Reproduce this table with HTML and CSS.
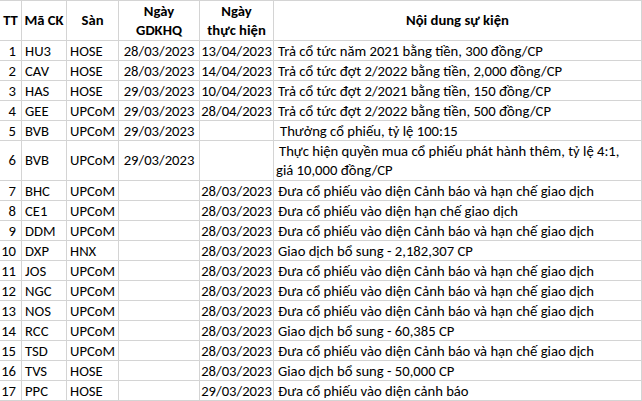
FILE: index.html
```html
<!DOCTYPE html>
<html lang="vi">
<head>
<meta charset="utf-8">
<link rel="stylesheet" href="styles.css">
</head>
<body>
<div class="sheet">
  <div class="c h">TT</div><div class="c h">Mã CK</div><div class="c h">Sàn</div><div class="c h">Ngày<br>GDKHQ</div><div class="c h">Ngày<br>thực hiện</div><div class="c h">Nội dung sự kiện</div>

  <div class="c n">1</div><div class="c t">HU3</div><div class="c t">HOSE</div><div class="c d">28/03/2023</div><div class="c d">13/04/2023</div><div class="c x">Trả cổ tức năm 2021 bằng tiền, 300 đồng/CP</div>
  <div class="c n">2</div><div class="c t">CAV</div><div class="c t">HOSE</div><div class="c d">28/03/2023</div><div class="c d">14/04/2023</div><div class="c x">Trả cổ tức đợt 2/2022 bằng tiền, 2,000 đồng/CP</div>
  <div class="c n">3</div><div class="c t">HAS</div><div class="c t">HOSE</div><div class="c d">29/03/2023</div><div class="c d">10/04/2023</div><div class="c x">Trả cổ tức đợt 2/2021 bằng tiền, 150 đồng/CP</div>
  <div class="c n">4</div><div class="c t">GEE</div><div class="c t">UPCoM</div><div class="c d">29/03/2023</div><div class="c d">28/04/2023</div><div class="c x">Trả cổ tức đợt 2/2022 bằng tiền, 500 đồng/CP</div>
  <div class="c n">5</div><div class="c t">BVB</div><div class="c t">UPCoM</div><div class="c d">29/03/2023</div><div class="c d"></div><div class="c x lead">Thưởng cổ phiếu, tỷ lệ 100:15</div>
  <div class="c n m">6</div><div class="c t m">BVB</div><div class="c t m">UPCoM</div><div class="c d m">29/03/2023</div><div class="c d m"></div><div class="c m wrap"><span class="sp">Thực hiện quyền mua cổ phiếu phát hành thêm, tỷ lệ 4:1,</span><br>giá 10,000 đồng/CP</div>
  <div class="c n">7</div><div class="c t">BHC</div><div class="c t">UPCoM</div><div class="c d"></div><div class="c d">28/03/2023</div><div class="c x">Đưa cổ phiếu vào diện Cảnh báo và hạn chế giao dịch</div>
  <div class="c n">8</div><div class="c t">CE1</div><div class="c t">UPCoM</div><div class="c d"></div><div class="c d">28/03/2023</div><div class="c x">Đưa cổ phiếu vào diện hạn chế giao dịch</div>
  <div class="c n">9</div><div class="c t">DDM</div><div class="c t">UPCoM</div><div class="c d"></div><div class="c d">28/03/2023</div><div class="c x">Đưa cổ phiếu vào diện Cảnh báo và hạn chế giao dịch</div>
  <div class="c n">10</div><div class="c t">DXP</div><div class="c t">HNX</div><div class="c d"></div><div class="c d">28/03/2023</div><div class="c x">Giao dịch bổ sung - 2,182,307 CP</div>
  <div class="c n">11</div><div class="c t">JOS</div><div class="c t">UPCoM</div><div class="c d"></div><div class="c d">28/03/2023</div><div class="c x">Đưa cổ phiếu vào diện Cảnh báo và hạn chế giao dịch</div>
  <div class="c n">12</div><div class="c t">NGC</div><div class="c t">UPCoM</div><div class="c d"></div><div class="c d">28/03/2023</div><div class="c x">Đưa cổ phiếu vào diện Cảnh báo và hạn chế giao dịch</div>
  <div class="c n">13</div><div class="c t">NOS</div><div class="c t">UPCoM</div><div class="c d"></div><div class="c d">28/03/2023</div><div class="c x">Đưa cổ phiếu vào diện Cảnh báo và hạn chế giao dịch</div>
  <div class="c n">14</div><div class="c t">RCC</div><div class="c t">UPCoM</div><div class="c d"></div><div class="c d">28/03/2023</div><div class="c x">Giao dịch bổ sung - 60,385 CP</div>
  <div class="c n">15</div><div class="c t">TSD</div><div class="c t">UPCoM</div><div class="c d"></div><div class="c d">28/03/2023</div><div class="c x">Đưa cổ phiếu vào diện Cảnh báo và hạn chế giao dịch</div>
  <div class="c n">16</div><div class="c t">TVS</div><div class="c t">HOSE</div><div class="c d"></div><div class="c d">28/03/2023</div><div class="c x">Giao dịch bổ sung - 50,000 CP</div>
  <div class="c n">17</div><div class="c t">PPC</div><div class="c t">HOSE</div><div class="c d"></div><div class="c d">29/03/2023</div><div class="c x">Đưa cổ phiếu vào diện cảnh báo</div>
</div>
</body>
</html>
```
FILE: styles.css
```css
html, body {
  margin: 0;
  padding: 0;
  background: #ffffff;
}
.sheet {
  display: grid;
  grid-template-columns: 21px 44px 51px 80px 73px 367px;
  grid-template-rows: 39px repeat(5, 19px) 39px repeat(11, 19px);
  gap: 1px;
  padding: 1px 1px 1px 0;
  width: max-content;
  background: #d4d4d4;
  font-family: Carlito, Lato, sans-serif;
  font-size: 14.67px;
  color: #000000;
}
.c {
  background: #ffffff;
  display: flex;
  align-items: flex-end;
  line-height: 17px;
  white-space: nowrap;
  overflow: hidden;
}
.h {
  font-weight: 700;
  align-items: center;
  justify-content: center;
  text-align: center;
  line-height: 19px;
}
.n {
  justify-content: flex-end;
  padding-right: 5px;
}
.t {
  padding-left: 3px;
}
.d {
  justify-content: center;
}
.x {
  padding-left: 4px;
}
.lead {
  padding-left: 6px;
}
.m {
  align-items: center;
}
.wrap {
  display: block;
  line-height: 19px;
  padding-top: 1px;
  padding-left: 2px;
  white-space: nowrap;
}
.sp {
  padding-left: 3px;
}
```
